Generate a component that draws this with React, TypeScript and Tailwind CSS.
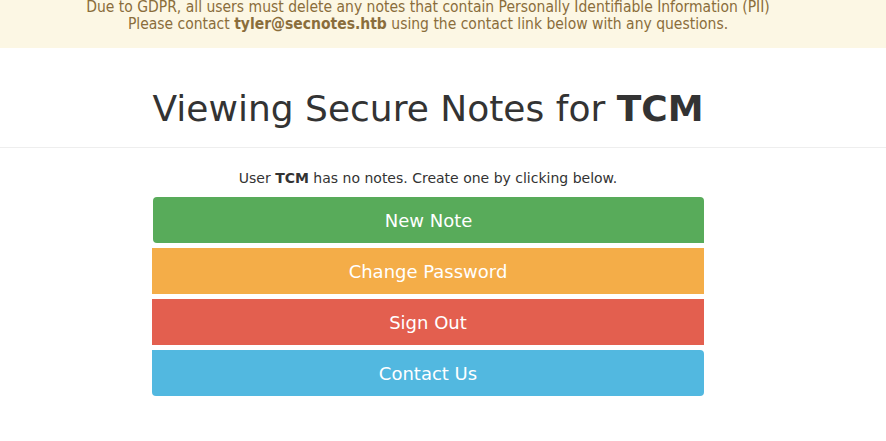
import React from "react";

const buttons = [
  { label: "New Note", cls: "bg-[#58ab5a] rounded-t-[4px] rounded-bl-[4px] ml-[1px]" },
  { label: "Change Password", cls: "bg-[#f4ad48]" },
  { label: "Sign Out", cls: "bg-[#e35f4f]" },
  { label: "Contact Us", cls: "bg-[#52b8e0] rounded-b-[4px] rounded-tr-[4px]" },
];

export default function App() {
  return (
    <div className="min-h-[441px] bg-white font-['DejaVu_Sans',sans-serif] text-[#333]">
      {/* GDPR banner, scrolled partly out of view */}
      <div className="h-[48px] bg-[#fcf7e4] text-[#8a6d3b] pr-[30px] overflow-hidden">
        <div className="-mt-[1px] text-center text-[15.5px] leading-[17px] font-['DejaVu_Sans_Condensed','DejaVu_Sans',sans-serif]">
          <p>Due to GDPR, all users must delete any notes that contain Personally Identifiable Information (PII)</p>
          <p>
            Please contact <b>tyler@secnotes.htb</b> using the contact link below with any questions.
          </p>
        </div>
      </div>

      <div className="h-[100px] border-b border-[#eee] pt-[21px] pr-[30px] flex items-center justify-center">
        <h1 className="text-[36px] font-normal leading-none pt-[1px]">
          Viewing Secure Notes for <b>TCM</b>
        </h1>
      </div>

      <div className="pr-[30px]">
        <p className="text-center text-[14px] mt-[21px] leading-[18px]">
          User <b>TCM</b> has no notes. Create one by clicking below.
        </p>

        <div className="w-[552px] mx-auto mt-[10px] flex flex-col gap-[5px]">
          {buttons.map((b) => (
            <div
              key={b.label}
              className={`h-[46px] flex items-center justify-center text-white text-[18px] ${b.cls}`}
            >
              {b.label}
            </div>
          ))}
        </div>
      </div>
    </div>
  );
}
